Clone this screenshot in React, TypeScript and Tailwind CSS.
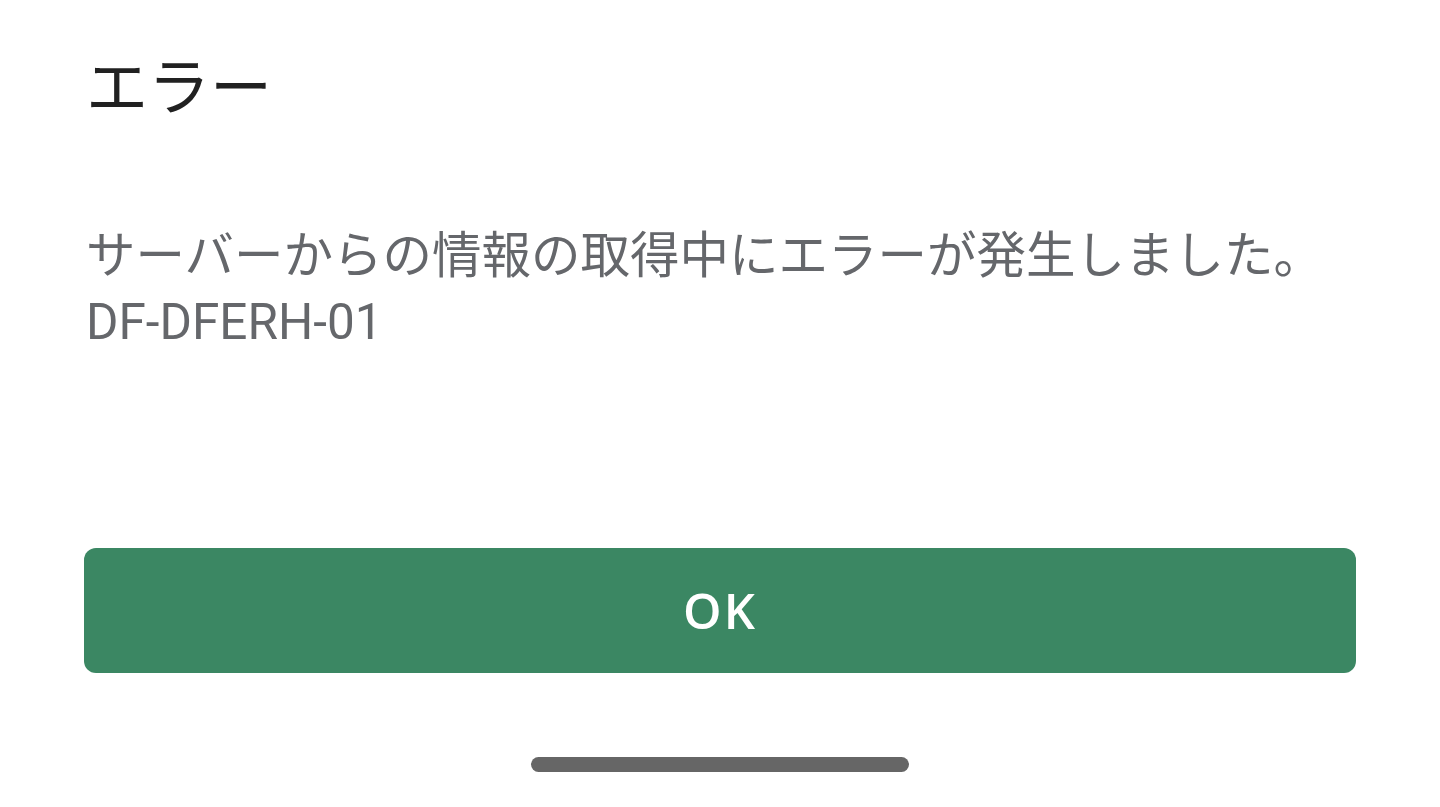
import React from "react";

const App: React.FC = () => {
  return (
    <div
      className="w-[1440px] h-[807px] bg-white flex flex-col px-[84px] overflow-hidden"
      style={{ fontFamily: '"Roboto", "Noto Sans CJK JP", sans-serif' }}
    >
      {/* Title */}
      <h1 className="pt-[50px] pl-[2px] text-[62px] leading-[78px] text-[#212121] font-normal">
        エラー
      </h1>

      {/* Message */}
      <div className="mt-[95px] pl-[2px] text-[49.5px] leading-[66px] text-[#65676b]">
        <p>サーバーからの情報の取得中にエラーが発生しました。</p>
        <p>DF-DFERH-01</p>
      </div>

      {/* OK button */}
      <button
        className="mt-[193px] h-[125px] w-full rounded-[12px] bg-[#3b8763] text-white text-[49px] font-semibold tracking-[0.04em]"
        style={{ fontFamily: '"Open Sans", sans-serif' }}
      >
        OK
      </button>

      {/* Home indicator */}
      <div className="flex justify-center mt-[84px]">
        <div className="w-[378px] h-[15px] rounded-full bg-[#666666]" />
      </div>
    </div>
  );
};

export default App;
